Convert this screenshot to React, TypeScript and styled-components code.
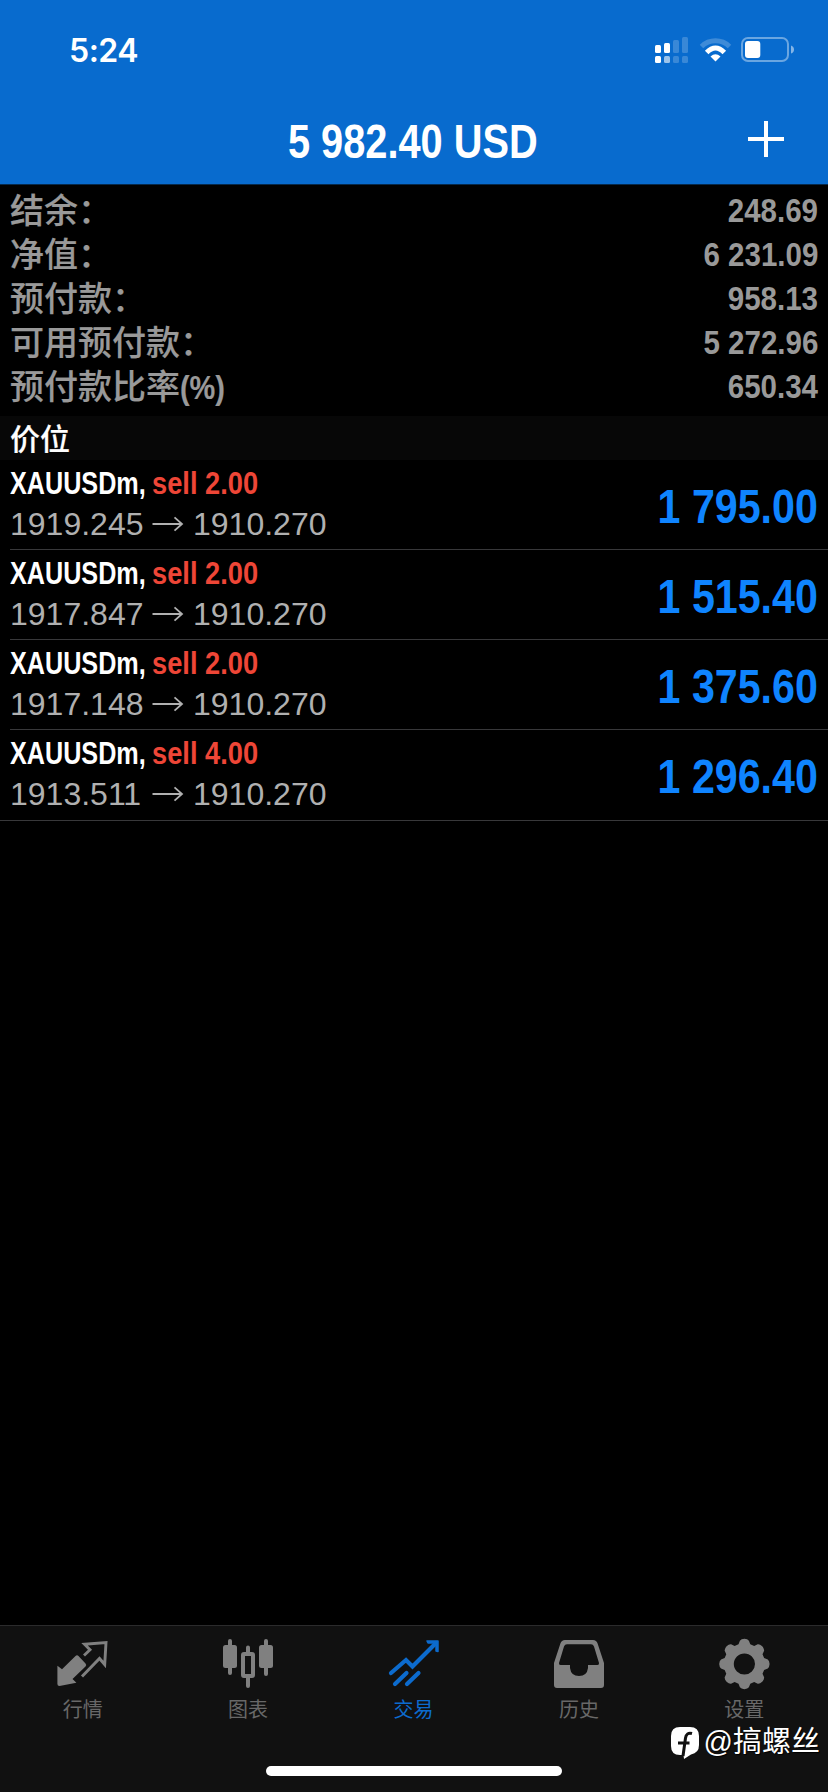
import React from "react";
import styled, { createGlobalStyle } from "styled-components";

const SANS = `"Liberation Sans", "Noto Sans CJK SC", sans-serif`;

const GlobalStyle = createGlobalStyle`
  * { box-sizing: border-box; }
  body { margin: 0; background: #000; }
`;

const Screen = styled.div`
  width: 828px;
  height: 1792px;
  display: flex;
  flex-direction: column;
  background: #000;
  font-family: ${SANS};
  overflow: hidden;
  position: relative;
  white-space: nowrap;
`;

/* Bold text squeezed horizontally, standing in for a condensed face. */
const Condensed = styled.span<{ $scale: number; $origin?: string }>`
  display: inline-block;
  font-weight: 700;
  transform: scaleX(${(p) => p.$scale});
  transform-origin: ${(p) => p.$origin ?? "left"} center;
`;

const Header = styled.header`
  height: 185px;
  flex: none;
  background: #086bce;
  border-bottom: 1px solid #05294c;
  color: #fff;
`;

const StatusBar = styled.div`
  height: 88px;
  padding: 12px 34px 0 69px;
  display: flex;
  align-items: center;
  justify-content: space-between;
`;

const Clock = styled.span`
  padding-top: 1px;
  font: 600 32px/38px Inter, sans-serif;
  letter-spacing: -0.5px;
`;

const StatusIcons = styled.svg`
  display: block;
  width: 145px;
  height: 32px;
`;

const TitleBar = styled.div`
  height: 96px;
  padding: 0 44px 0 0;
  display: grid;
  grid-template-columns: 250px 326px 1fr;
  align-items: center;
`;

const Title = styled.h1`
  grid-column: 2;
  margin: 12px 0 0;
  text-align: center;
  font: 700 48px/56px ${SANS};
`;

const AddButton = styled.button`
  justify-self: end;
  display: block;
  margin-top: 6px;
  padding: 0;
  width: 36px;
  height: 36px;
  border: 0;
  background: none;
`;

const Summary = styled.section`
  height: 231px;
  flex: none;
  padding: 4px 10px 0;
`;

const SummaryRow = styled.div`
  height: 44px;
  display: flex;
  align-items: center;
  justify-content: space-between;
  color: #999;
  font-size: 34px;
  line-height: 44px;
`;

const SummaryLabel = styled.span`
  font-weight: 500;
  -webkit-text-stroke: 0.2px currentColor;
`;

const SummaryValue = styled(Condensed)`
  line-height: 42px;
  padding-bottom: 2px;
`;

const SectionTitle = styled.h2`
  margin: 0;
  height: 44px;
  flex: none;
  padding: 2px 10px 0;
  background: #070707;
  color: #fff;
  font: 500 30px/44px ${SANS};
  -webkit-text-stroke: 0.2px currentColor;
`;

const Position = styled.div<{ $last?: boolean }>`
  height: ${(p) => (p.$last ? 91 : 90)}px;
  flex: none;
  margin-left: ${(p) => (p.$last ? 0 : 10)}px;
  padding: 0 10px 0 ${(p) => (p.$last ? 10 : 0)}px;
  border-bottom: 1px solid #38383a;
  display: flex;
  justify-content: space-between;
`;

const Details = styled.div`
  display: flex;
  flex-direction: column;
  padding-top: 2px;
`;

const Instrument = styled.div`
  display: grid;
  grid-template-columns: 142px auto;
  font-size: 32px;
  line-height: 42px;
  color: #fff;
`;

const Side = styled(Condensed)`
  color: #ee4637;
`;

const Prices = styled.div`
  display: grid;
  grid-template-columns: 142px 41px auto;
  align-items: center;
  font-size: 32px;
  line-height: 40px;
  color: #b0b0b0;
`;

const Arrow = styled.svg`
  width: 32px;
  height: 16px;
`;

const Profit = styled(Condensed)`
  font-size: 48px;
  line-height: 94px;
  height: 89px;
  color: #0f84ff;
`;

const TabBar = styled.nav`
  margin-top: auto;
  height: 167px;
  border-top: 1px solid #2b2b2c;
  background: #111;
  display: flex;
  padding: 11px 1px 0 0;
`;

const Tab = styled.a<{ $active?: boolean }>`
  flex: 1;
  display: flex;
  flex-direction: column;
  align-items: center;
  color: ${(p) => (p.$active ? "#0c6bce" : "#808080")};
`;

const TabIcon = styled.svg`
  width: 54px;
  height: 54px;
`;

const TabLabel = styled.span<{ $active?: boolean }>`
  margin-top: 4px;
  font-size: 20px;
  line-height: 30px;
  color: ${(p) => (p.$active ? "#0c6bce" : "#686868")};
`;

const HomeIndicator = styled.div`
  position: absolute;
  left: 266px;
  bottom: 16px;
  width: 296px;
  height: 10px;
  border-radius: 5px;
  background: #fff;
`;

const Watermark = styled.div`
  position: absolute;
  right: 8px;
  bottom: 28px;
  display: flex;
  align-items: center;
  color: #fff;
  font-size: 29px;
  line-height: 44px;
  text-shadow: 1px 1px 1px #000;
`;

const WatermarkLogo = styled.svg`
  width: 30px;
  height: 34px;
  margin: 2px 4px 0 0;
`;

const summary = [
  { label: "结余：", value: "248.69" },
  { label: "净值：", value: "6 231.09" },
  { label: "预付款：", value: "958.13" },
  { label: "可用预付款：", value: "5 272.96" },
  { label: "预付款比率", unit: "(%)", value: "650.34" },
];

const positions = [
  { volume: "2.00", open: "1919.245", profit: "1 795.00" },
  { volume: "2.00", open: "1917.847", profit: "1 515.40" },
  { volume: "2.00", open: "1917.148", profit: "1 375.60" },
  { volume: "4.00", open: "1913.511", profit: "1 296.40" },
];

const gearPath = (() => {
  const c = 27.4;
  let d = "";
  for (let i = 0; i < 8; i++) {
    const a = (i * Math.PI) / 4;
    const pt = (r: number, o: number) =>
      `${(c + r * Math.sin(a + o)).toFixed(2)} ${(27 - r * Math.cos(a + o)).toFixed(2)}`;
    d += `${i ? "L" : "M"}${pt(20.6, -0.29)}L${pt(23.8, -0.19)}Q${pt(25.2, -0.13)} ${pt(25.2, 0)}Q${pt(25.2, 0.13)} ${pt(23.8, 0.19)}L${pt(20.6, 0.29)}`;
  }
  return d + "ZM38 27A10.6 10.6 0 1 0 16.800 27A10.6 10.6 0 1 0 38 27Z";
})();

const tabs = [
  {
    label: "行情",
    icon: (
      <>
        <path
          d="M1.400 28.700L6 32.300 19.500 19Q21 17.500 22.500 19L29.500 26.500Q31 28 29.500 29.500L16.500 42 20.400 45.700 3.500 49Q1.400 49 1.400 47Z"
          fill="currentColor"
        />
        <path d="M28 18.500L34 12.800 28.500 7.200 50 5.500 48.700 27.500 43.500 21.500 26 39.500" fill="none" stroke="currentColor" strokeWidth="2.900" />
      </>
    ),
  },
  {
    label: "图表",
    icon: (
      <>
        <rect x="2" y="8" width="14" height="23" rx="2.500" fill="currentColor" />
        <rect x="38" y="8" width="14" height="23" rx="2.500" fill="currentColor" />
        <rect x="22" y="17" width="10" height="22" rx="1" fill="none" stroke="currentColor" strokeWidth="4" />
        <path d="M9 4V36M45 4V37M27 10.500V16M27 40V49" stroke="currentColor" strokeWidth="4" strokeLinecap="round" />
      </>
    ),
  },
  {
    label: "交易",
    active: true,
    icon: (
      <>
        <path
          d="M4 36L19 23 25.500 29.500 49 6M8 47L19.500 36M20 47L31.500 36"
          fill="none"
          stroke="currentColor"
          strokeWidth="4.200"
          strokeLinecap="round"
        />
        <path d="M40 4H51V14.500L49 14V8L46 6H41Z" fill="currentColor" stroke="currentColor" strokeWidth="1.500" strokeLinejoin="round" />
      </>
    ),
  },
  {
    label: "历史",
    icon: (
      <path
        fillRule="evenodd"
        fill="currentColor"
        d="M13 3H41Q44.500 3 45.600 6.500L52 26V48Q52 51 49 51H5Q2 51 2 48V26L8.400 6.500Q9.500 3 13 3ZM15 7.300Q12.800 7.300 12 9.500L7 26Q6.700 28 8.500 28H18V31Q19 39 27 39Q35 39 36 31V28H45.500Q47.300 28 47 26L42 9.500Q41.200 7.300 39 7.300Z"
      />
    ),
  },
  { label: "设置", icon: <path d={gearPath} fillRule="evenodd" fill="currentColor" /> },
];

export default function App() {
  return (
    <Screen>
      <GlobalStyle />
      <Header>
        <StatusBar>
          <Clock>5:24</Clock>
          <StatusIcons viewBox="0 0 145 32" fill="#fff">
            <rect x="6" y="11" width="6" height="8" rx="1.500" />
            <rect x="15" y="9" width="6" height="10" rx="1.500" />
            <rect x="24" y="6" width="6" height="13" rx="1.500" opacity="0.200" />
            <rect x="33" y="3" width="6" height="16" rx="1.500" opacity="0.200" />
            <rect x="6" y="22" width="6" height="7" rx="1.500" />
            <rect x="15" y="22" width="6" height="7" rx="1.500" opacity="0.600" />
            <rect x="24" y="22" width="6" height="7" rx="1.500" opacity="0.200" />
            <rect x="33" y="22" width="6" height="7" rx="1.500" opacity="0.200" />
            <path d="M52.500 12.500A20 20 0 0 1 80.500 12.500" fill="none" stroke="#fff" strokeWidth="5" opacity="0.220" />
            <path d="M57.700 18.500Q66.500 9.500 75.300 18.500" fill="none" stroke="#fff" strokeWidth="5" />
            <path d="M61.500 22.500Q66.500 18 71.500 22.500L66.500 27.500Z" />
            <rect x="93" y="4" width="46" height="23" rx="6" fill="none" stroke="#fff" strokeWidth="2" opacity="0.400" />
            <rect x="96" y="7" width="15.300" height="17" rx="3" />
            <path d="M142 11.500Q145 12.500 145 15.500Q145 18.500 142 19.500Z" opacity="0.500" />
          </StatusIcons>
        </StatusBar>
        <TitleBar>
          <Title>
            <Condensed $scale={0.828} $origin="center">
              5 982.40 USD
            </Condensed>
          </Title>
          <AddButton aria-label="添加">
            <svg width="36" height="36" viewBox="0 0 36 36">
              <path d="M18 0V36M0 18H36" stroke="#fff" strokeWidth="4" />
            </svg>
          </AddButton>
        </TitleBar>
      </Header>
      <Summary>
        {summary.map((row) => (
          <SummaryRow key={row.label}>
            <SummaryLabel>
              {row.label}
              {row.unit && <Condensed $scale={0.85}>{row.unit}</Condensed>}
            </SummaryLabel>
            <SummaryValue $scale={0.868} $origin="right">
              {row.value}
            </SummaryValue>
          </SummaryRow>
        ))}
      </Summary>
      <SectionTitle>价位</SectionTitle>
      {positions.map((p, i) => (
        <Position key={p.open} $last={i === positions.length - 1}>
          <Details>
            <Instrument>
              <Condensed $scale={0.787}>XAUUSDm,</Condensed>
              <Side $scale={0.852}>sell {p.volume}</Side>
            </Instrument>
            <Prices>
              <span>{p.open}</span>
              <Arrow viewBox="0 0 32 16">
                <path d="M0.500 8H30M22.500 1.300L30 8L22.500 14.700" fill="none" stroke="currentColor" strokeWidth="1.800" />
              </Arrow>
              <span>1910.270</span>
            </Prices>
          </Details>
          <Profit $scale={0.858} $origin="right">
            {p.profit}
          </Profit>
        </Position>
      ))}
      <TabBar>
        {tabs.map((t) => (
          <Tab key={t.label} $active={t.active}>
            <TabIcon viewBox="0 0 54 54">{t.icon}</TabIcon>
            <TabLabel $active={t.active}>{t.label}</TabLabel>
          </Tab>
        ))}
      </TabBar>
      <Watermark>
        <WatermarkLogo viewBox="0 0 30 34">
          <path d="M10 1H20Q29 1 29 10V19Q29 27 21 28.500L14 33 13.500 29H10Q1 29 1 20V10Q1 1 10 1Z" fill="#fff" />
          <path d="M22 7.500Q16.500 6 15.500 12L13 30M8 17H19.500" fill="none" stroke="#111" strokeWidth="3" />
        </WatermarkLogo>
        @搞螺丝
      </Watermark>
      <HomeIndicator />
    </Screen>
  );
}
